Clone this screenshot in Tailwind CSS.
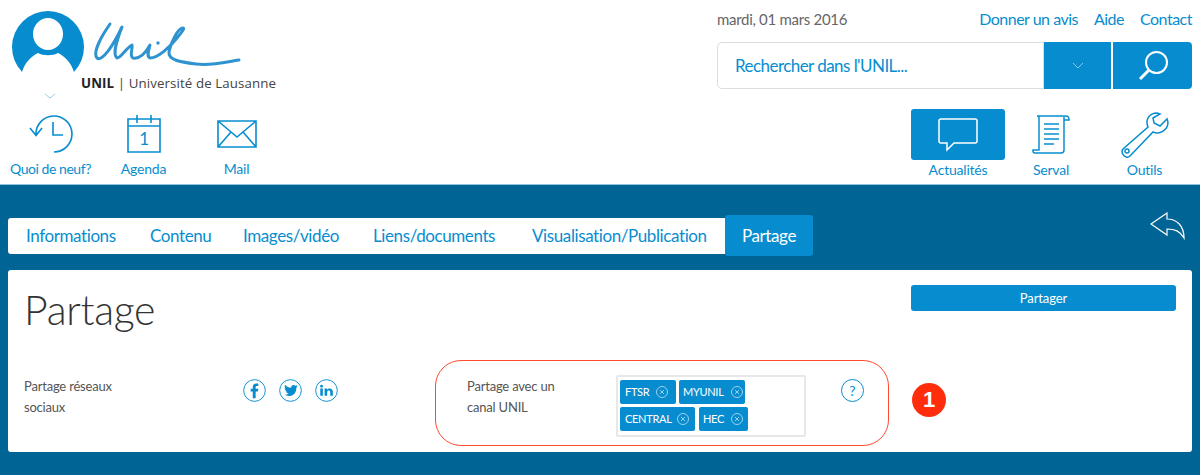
<!DOCTYPE html>
<html lang="fr">
<head>
  <meta charset="UTF-8" />
  <title>Partage</title>
  <script src="https://cdn.jsdelivr.net/npm/@tailwindcss/browser@4"></script>
</head>
<body class="h-[475px] overflow-hidden bg-[#006494] font-['Lato',sans-serif] text-[#078dcf]">
  <header class="h-[185px] bg-white border-b border-[#8fc4d8] flex justify-between pr-2">
    <!-- logo + raccourcis -->
    <div class="w-[300px]">
      <div class="h-[115px] relative">
        <svg class="absolute left-0 top-0" width="300" height="105" viewBox="0 0 300 105" fill="none">
          <path d="M22 72 A36 36 0 1 1 74 72 C71 63 66 57 58 53 C53 56 43 56 38 53 C30 57 25 63 22 72 Z" fill="#078dcf"/>
          <ellipse cx="48" cy="34" rx="15" ry="16" fill="#fff"/>
          <path d="M110 24 C103 34 92 52 97 58 C102 62 113 46 122 27 C117 40 112 54 117 58 C121 58 126 48 132 45 C133 49 129 56 133 58 C139 59 145 54 150 45 C149 50 146 56 150 58 C158 58 170 47 177 38 C182 32 185 28 183 28 C178 28 171 42 169 52 C168 60 180 62 196 64 C211 66 226 62 239 60" stroke="#2f93d0" stroke-width="3" stroke-linecap="round" stroke-linejoin="round"/>
          <circle cx="158" cy="43" r="1.7" fill="#2f93d0"/>
          <path d="M45 94 L50 98 L55 94" stroke="#9ccde8"/>
        </svg>
        <div class="absolute left-[81px] top-[75px] text-[13.3px] leading-[17px] tracking-[0.1px] font-['Open_Sans',sans-serif] text-[#444] whitespace-nowrap"><b class="text-[#222]">UNIL</b> | Université de Lausanne</div>
      </div>
      <nav class="flex pl-[4px] text-[14px] tracking-[-0.2px] leading-[18px] text-center">
        <a class="w-[93px] flex flex-col items-center gap-[7px]">
          <svg width="46" height="38" viewBox="0 0 46 38" fill="none" stroke="#078dcf" stroke-width="1.6">
            <path d="M8 20 A18 18 0 1 1 26 37 M2 13 L8 20.5 L14 13 M25 7 V20 H35"/>
          </svg>
          <span class="tracking-[-0.45px] whitespace-nowrap">Quoi de neuf?</span>
        </a>
        <a class="w-[93px] flex flex-col items-center gap-[7px]">
          <svg width="34" height="38" viewBox="0 0 34 38" fill="none" stroke="#078dcf" stroke-width="1.6">
            <path d="M1 4 H33 V37 H1 Z M1 11 H33 M10 0 V8 M24 0 V8"/>
            <text x="17" y="30" font-size="17" text-anchor="middle" fill="#078dcf" stroke="none">1</text>
          </svg>
          <span>Agenda</span>
        </a>
        <a class="w-[93px] flex flex-col items-center gap-[7px]">
          <svg width="40" height="38" viewBox="0 0 40 38" fill="none" stroke="#078dcf" stroke-width="1.6">
            <path d="M1 6 H39 V32 H1 Z M1 6 L20 22 L39 6 M1 32 L14 17 M39 32 L26 17"/>
          </svg>
          <span>Mail</span>
        </a>
      </nav>
    </div>
    <!-- date, recherche, outils -->
    <div class="w-[475px] pt-[9px]">
      <div class="flex justify-between h-[20px] text-[15px] tracking-[-0.3px] leading-[20px]">
        <span class="text-[#666]">mardi, 01 mars 2016</span>
        <div class="flex gap-4 text-[16px] tracking-[-0.5px]"><a>Donner un avis</a><a>Aide</a><a>Contact</a></div>
      </div>
      <div class="flex mt-[13px] h-[47px]">
        <div class="w-[327px] border border-[#ddd] rounded-l-[5px] pl-[17px] text-[17px] tracking-[-0.55px] leading-[45px]">Rechercher dans l'UNIL...</div>
        <div class="w-[67px] bg-[#078dcf] flex items-center justify-center">
          <svg width="12" height="7" viewBox="0 0 12 7" fill="none" stroke="#8cc8ea"><path d="M1 1 L6 6 L11 1"/></svg>
        </div>
        <div class="ml-[2px] w-[79px] bg-[#078dcf] rounded-r-[4px] flex items-center justify-center">
          <svg width="32" height="32" viewBox="0 0 32 32" fill="none" stroke="#fff"><circle cx="19.5" cy="12.5" r="10.5" stroke-width="2"/><path d="M12 20 L3 29" stroke-width="3"/></svg>
        </div>
      </div>
      <nav class="flex justify-end mt-[20px] text-[14px] tracking-[-0.2px] leading-[18px] text-center">
        <a class="w-[94px] flex flex-col items-center gap-[1px]">
          <span class="w-[94px] h-[51px] bg-[#078dcf] rounded-[3px] flex items-center justify-center">
            <svg width="40" height="34" viewBox="0 0 40 34" fill="none" stroke="#fff" stroke-width="1.5"><path d="M3 1 H37 Q39 1 39 3 V23 Q39 25 37 25 H16 L9 32 V25 H3 Q1 25 1 23 V3 Q1 1 3 1 Z"/></svg>
          </span>
          <span>Actualités</span>
        </a>
        <a class="w-[92px] flex flex-col items-center gap-[1px]">
          <span class="h-[51px] flex items-center justify-center">
            <svg width="38" height="40" viewBox="0 0 38 40" fill="none" stroke="#078dcf" stroke-width="1.5"><path d="M7 35 V3 Q7 1 5 1 H34 Q37 1 37 5 H32 V35 Q32 38 29 38 H3 Q1 38 1 36 V35 Z M32 5 V2 M12 9 H27 M12 14 H27 M12 19 H27 M12 24 H27 M12 29 H22"/></svg>
          </span>
          <span>Serval</span>
        </a>
        <a class="w-[95px] flex flex-col items-center gap-[1px]">
          <span class="h-[51px] flex items-center justify-center">
            <svg width="48" height="46" viewBox="0 0 48 46" fill="none" stroke="#078dcf" stroke-width="1.5"><path d="M36 1 C28 1 24 8 27 15 L2 37 C-1 41 5 48 9 44 L32 20 C39 23 47 18 47 10 L46 7 L39 14 L33 11 L32 6 L39 2 Z"/><circle cx="6" cy="39" r="2"/></svg>
          </span>
          <span>Outils</span>
        </a>
      </nav>
    </div>
  </header>

  <main class="px-2">
    <div class="flex justify-between h-[85px] relative">
      <div class="flex items-center self-start mt-[33px] h-[36px] bg-white rounded-l-[3px] text-[17px] tracking-[-0.4px] leading-[38px] pl-[18px] w-[805px] whitespace-nowrap">
        <a class="w-[124px]">Informations</a>
        <a class="w-[93px]">Contenu</a>
        <a class="w-[130px]">Images/vidéo</a>
        <a class="w-[159px]">Liens/documents</a>
        <a>Visualisation/Publication</a>
        <a class="ml-auto self-start -mt-[3px] w-[88px] h-[41px] bg-[#078dcf] rounded-[3px] text-white text-center leading-[41px] shrink-0">Partage</a>
      </div>
      <svg class="absolute right-[6px] top-[27px]" width="36" height="28" viewBox="0 0 36 28" fill="none" stroke="#fff" stroke-width="1.2"><path d="M1 12 L17 1 V7 C27 7 34 14 34 26 C30 19 25 17 17 17 V23 Z"/></svg>
    </div>

    <section class="relative h-[182px] bg-white rounded-[3px] px-4 text-[#444]">
      <div class="flex justify-between h-[90px]">
        <h1 class="pt-[14px] h-[63px] overflow-hidden text-[41px] font-light tracking-[-0.3px] leading-[52px] text-[#333]">Partage</h1>
        <button class="mt-[15px] pt-[2px] w-[265px] h-[26px] bg-[#078dcf] rounded-[3px] text-white text-[13px] tracking-[-0.1px]">Partager</button>
      </div>
      <div class="flex">
        <div class="w-[219px] pt-[16px] text-[13px] tracking-[-0.2px] leading-[21px] text-[#555]">Partage réseaux<br>sociaux</div>
        <div class="w-[192px] pt-[19px] flex gap-[13px] items-start">
          <svg width="23" height="23" viewBox="0 0 24 24"><circle cx="12" cy="12" r="11.3" fill="none" stroke="#078dcf"/><path d="M13.2 20 V13 H15.6 L16 10.2 H13.2 V8.6 C13.2 7.7 13.6 7.2 14.6 7.2 H16 V4.8 H13.9 C11.6 4.8 10.2 6.2 10.2 8.4 V10.2 H8 V13 H10.2 V20 Z" fill="#078dcf"/></svg>
          <svg width="23" height="23" viewBox="0 0 24 24"><circle cx="12" cy="12" r="11.3" fill="none" stroke="#078dcf"/><path d="M19.5 7.4 C18.9 7.7 18.3 7.8 17.7 7.9 C18.4 7.5 18.9 6.9 19.1 6.2 C18.5 6.6 17.8 6.8 17.1 7 C15.6 5.4 13 6.4 12.7 8.4 C12.7 8.7 12.7 9 12.8 9.2 C10.2 9.1 7.9 7.9 6.4 6 C5.6 7.4 6 9.2 7.3 10.1 C6.8 10.1 6.3 9.9 5.9 9.7 C5.9 11.2 7 12.5 8.4 12.8 C7.9 12.9 7.5 13 7 12.9 C7.4 14.1 8.5 15 9.9 15 C8.6 16 7 16.5 5.4 16.3 C11.9 20.1 18.5 15.7 18.1 9 C18.7 8.6 19.2 8 19.5 7.4 Z" fill="#078dcf"/></svg>
          <svg width="23" height="23" viewBox="0 0 24 24"><circle cx="12" cy="12" r="11.3" fill="none" stroke="#078dcf"/><path d="M5.5 10 H8.2 V17.5 H5.5 Z M6.85 6 A1.5 1.5 0 1 1 6.85 9 A1.5 1.5 0 0 1 6.85 6 Z M10 10 H12.6 V11.1 C13.2 10.2 14.1 9.8 15.2 9.8 C17.4 9.8 18.6 11.1 18.6 13.6 V17.5 H15.9 V14 C15.9 12.8 15.4 12.1 14.4 12.1 C13.3 12.1 12.7 12.8 12.7 14 V17.5 H10 Z" fill="#078dcf"/></svg>
        </div>
        <!-- canal UNIL, encadré rouge -->
        <div class="w-[454px] h-[86px] border border-[#ff4a30] rounded-[26px] flex pl-[31px] pt-[14px]">
          <div class="w-[149px] pt-[1px] text-[13px] tracking-[-0.2px] leading-[21px] text-[#555]">Partage avec un<br>canal UNIL</div>
          <div class="w-[190px] h-[62px] border-2 border-[#e8e8e8] rounded-[2px] pl-[2px] pt-[3px] flex flex-wrap content-start gap-[3px] text-white text-[11px] tracking-[-0.3px] leading-[24px]">
            <span class="h-[24px] w-[56px] bg-[#078dcf] rounded-[2px] pl-[5px] flex items-center gap-[7px]">FTSR
              <svg width="12" height="12" viewBox="0 0 12 12" fill="none" stroke="#bfe2f5" stroke-width="0.8"><circle cx="6" cy="6" r="5.5"/><path d="M4 4 L8 8 M8 4 L4 8"/></svg></span>
            <span class="h-[24px] w-[66px] bg-[#078dcf] rounded-[2px] pl-[4px] flex items-center gap-[7px]">MYUNIL
              <svg width="12" height="12" viewBox="0 0 12 12" fill="none" stroke="#bfe2f5" stroke-width="0.8"><circle cx="6" cy="6" r="5.5"/><path d="M4 4 L8 8 M8 4 L4 8"/></svg></span>
            <span class="h-[24px] w-[75px] bg-[#078dcf] rounded-[2px] pl-[5px] flex items-center gap-[6px]">CENTRAL
              <svg width="12" height="12" viewBox="0 0 12 12" fill="none" stroke="#bfe2f5" stroke-width="0.8"><circle cx="6" cy="6" r="5.5"/><path d="M4 4 L8 8 M8 4 L4 8"/></svg></span>
            <span class="h-[24px] w-[49px] ml-[1px] bg-[#078dcf] rounded-[2px] pl-[4px] flex items-center gap-[7px]">HEC
              <svg width="12" height="12" viewBox="0 0 12 12" fill="none" stroke="#bfe2f5" stroke-width="0.8"><circle cx="6" cy="6" r="5.5"/><path d="M4 4 L8 8 M8 4 L4 8"/></svg></span>
          </div>
          <div class="ml-[35px] mt-[4px] w-[23px] h-[23px] rounded-full border border-[#078dcf] text-center text-[14px] leading-[21px] text-[#078dcf]">?</div>
        </div>
        <div class="absolute left-[904px] top-[113px] w-[34px] h-[34px] rounded-full bg-[#ff2d0c] text-white text-center font-['Liberation_Sans',sans-serif] font-bold text-[22px] leading-[34px]">1</div>
      </div>
    </section>
  </main>
</body>
</html>
